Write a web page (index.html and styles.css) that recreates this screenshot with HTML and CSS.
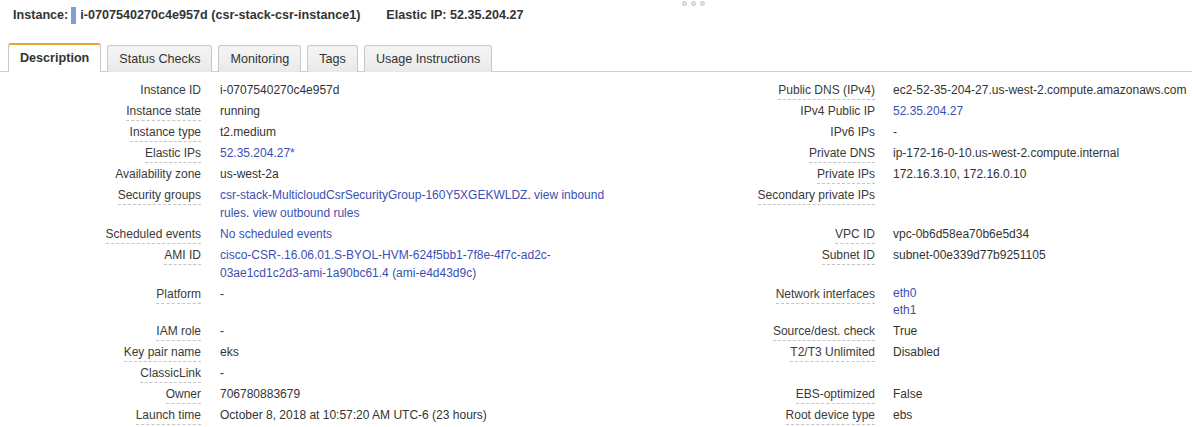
FILE: index.html
```html
<!DOCTYPE html>
<html>
<head>
<meta charset="utf-8">
<link rel="stylesheet" href="styles.css">
</head>
<body>
<div class="grip"><span></span><span></span><span></span></div>
<div class="header">
  <span class="h-label">Instance:</span>
  <span class="sel-bar"></span>
  <span class="h-val">i-0707540270c4e957d (csr-stack-csr-instance1)</span>
  <span class="h-eip">Elastic IP: 52.35.204.27</span>
</div>
<ul class="tabs">
  <li class="tab active">Description</li>
  <li class="tab">Status Checks</li>
  <li class="tab">Monitoring</li>
  <li class="tab">Tags</li>
  <li class="tab">Usage Instructions</li>
</ul>
<div class="details">
  <div class="lbl"><span class="plain">Instance ID</span></div>
  <div class="val">i-0707540270c4e957d</div>
  <div class="lbl"><span>Public DNS (IPv4)</span></div>
  <div class="val">ec2-52-35-204-27.us-west-2.compute.amazonaws.com</div>

  <div class="lbl"><span>Instance state</span></div>
  <div class="val">running</div>
  <div class="lbl"><span class="plain">IPv4 Public IP</span></div>
  <div class="val"><a>52.35.204.27</a></div>

  <div class="lbl"><span>Instance type</span></div>
  <div class="val">t2.medium</div>
  <div class="lbl"><span class="plain">IPv6 IPs</span></div>
  <div class="val">-</div>

  <div class="lbl"><span>Elastic IPs</span></div>
  <div class="val"><a>52.35.204.27*</a></div>
  <div class="lbl"><span>Private DNS</span></div>
  <div class="val">ip-172-16-0-10.us-west-2.compute.internal</div>

  <div class="lbl"><span class="plain">Availability zone</span></div>
  <div class="val">us-west-2a</div>
  <div class="lbl"><span>Private IPs</span></div>
  <div class="val">172.16.3.10, 172.16.0.10</div>

  <div class="lbl"><span>Security groups</span></div>
  <div class="val"><a>csr-stack-MulticloudCsrSecurityGroup-160Y5XGEKWLDZ</a>. <a>view inbound rules</a>. <a>view outbound rules</a></div>
  <div class="lbl"><span>Secondary private IPs</span></div>
  <div class="val"></div>

  <div class="lbl"><span>Scheduled events</span></div>
  <div class="val"><a>No scheduled events</a></div>
  <div class="lbl"><span>VPC ID</span></div>
  <div class="val">vpc-0b6d58ea70b6e5d34</div>

  <div class="lbl"><span>AMI ID</span></div>
  <div class="val"><a>cisco-CSR-.16.06.01.S-BYOL-HVM-624f5bb1-7f8e-4f7c-ad2c-03ae1cd1c2d3-ami-1a90bc61.4 (ami-e4d43d9c)</a></div>
  <div class="lbl"><span>Subnet ID</span></div>
  <div class="val">subnet-00e339d77b9251105</div>

  <div class="lbl"><span>Platform</span></div>
  <div class="val">-</div>
  <div class="lbl"><span>Network interfaces</span></div>
  <div class="val"><a class="blk">eth0</a><a class="blk">eth1</a></div>

  <div class="lbl"><span>IAM role</span></div>
  <div class="val">-</div>
  <div class="lbl"><span>Source/dest. check</span></div>
  <div class="val">True</div>

  <div class="lbl"><span>Key pair name</span></div>
  <div class="val">eks</div>
  <div class="lbl"><span>T2/T3 Unlimited</span></div>
  <div class="val">Disabled</div>

  <div class="lbl"><span>ClassicLink</span></div>
  <div class="val">-</div>
  <div class="lbl"></div>
  <div class="val"></div>

  <div class="lbl"><span>Owner</span></div>
  <div class="val">706780883679</div>
  <div class="lbl"><span>EBS-optimized</span></div>
  <div class="val">False</div>

  <div class="lbl"><span>Launch time</span></div>
  <div class="val">October 8, 2018 at 10:57:20 AM UTC-6 (23 hours)</div>
  <div class="lbl"><span>Root device type</span></div>
  <div class="val">ebs</div>
</div>
</body>
</html>
```
FILE: styles.css
```css
html, body {
  margin: 0;
  padding: 0;
  background: #fff;
}
body {
  font-family: "Liberation Sans", Arial, Helvetica, sans-serif;
  color: #333;
  font-size: 12px;
  position: relative;
  width: 1192px;
  height: 427px;
  overflow: hidden;
}
.grip {
  position: absolute;
  left: 682px;
  top: 1px;
  display: flex;
  gap: 4px;
}
.grip span {
  width: 5px;
  height: 5px;
  box-sizing: border-box;
  border-radius: 50%;
  border: 1px solid #c8c8c8;
  background: #e4e4e4;
}
.header {
  display: flex;
  align-items: center;
  height: 30px;
  padding-left: 13px;
  font-size: 12.6px;
  font-weight: bold;
  color: #333;
}
.h-label {
  margin-right: 3px;
}
.sel-bar {
  display: inline-block;
  width: 5px;
  height: 17px;
  background: #7e9fd6;
  margin-right: 4px;
}
.h-eip {
  margin-left: 26px;
}
.tabs {
  list-style: none;
  margin: 13px 0 0 0;
  padding: 0 0 0 8px;
  display: flex;
  align-items: flex-end;
  gap: 6px;
  border-bottom: 1px solid #cfcfcf;
  height: 28px;
}
.tab {
  box-sizing: border-box;
  height: 27px;
  padding: 0 11px 1px 11px;
  margin-bottom: -1px;
  display: flex;
  align-items: center;
  font-size: 12.6px;
  color: #333;
  background: linear-gradient(#f5f5f5, #e9e9e9);
  border: 1px solid #c6c6c6;
  border-bottom: none;
  border-radius: 3px 3px 0 0;
}
.tab.active {
  height: 29px;
  background: #fff;
  border-top: 2px solid #eca22f;
  font-weight: bold;
}
.details {
  display: grid;
  grid-template-columns: 201px 419px 255px 1fr;
  margin-top: 7px;
  line-height: 18px;
}
.lbl, .val {
  padding: 2px 0 1px 0;
}
.lbl {
  text-align: right;
}
.lbl span {
  display: inline-block;
  line-height: 18px;
  margin-bottom: -1px;
  border-bottom: 1px dashed #c4c4c4;
  color: #3a3a3a;
}
.lbl span.plain {
  border-bottom-color: transparent;
}
.val {
  padding-left: 19px;
  padding-right: 2px;
  color: #333;
}
.details .val:nth-child(4n) {
  padding-left: 18px;
}
.val a {
  color: #3c4fb4;
  text-decoration: none;
}
.val a.blk {
  display: block;
  line-height: 17px;
}
```
